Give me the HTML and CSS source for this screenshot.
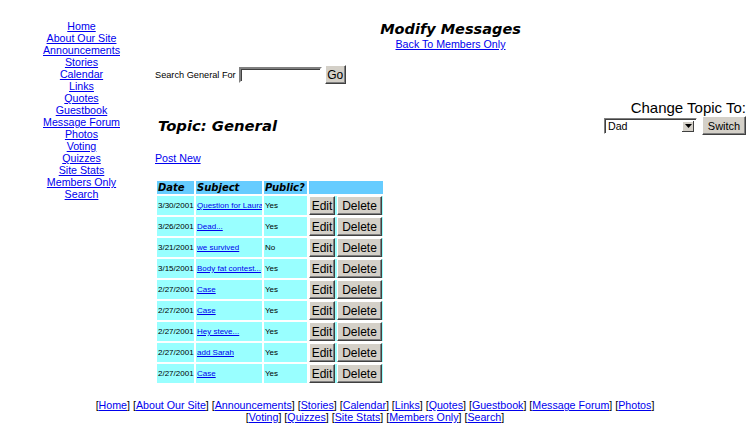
FILE: index.html
```html
<!DOCTYPE html>
<html>
<head>
<meta charset="utf-8">
<title>Modify Messages</title>
<link rel="stylesheet" href="styles.css">
</head>
<body>
<div class="page">
  <nav class="side-nav">
    <a href="#">Home</a>
    <a href="#">About Our Site</a>
    <a href="#">Announcements</a>
    <a href="#">Stories</a>
    <a href="#">Calendar</a>
    <a href="#">Links</a>
    <a href="#">Quotes</a>
    <a href="#">Guestbook</a>
    <a href="#">Message Forum</a>
    <a href="#">Photos</a>
    <a href="#">Voting</a>
    <a href="#">Quizzes</a>
    <a href="#">Site Stats</a>
    <a href="#">Members Only</a>
    <a href="#">Search</a>
  </nav>
  <main class="main">
    <header class="head">
      <h1 class="title">Modify Messages</h1>
      <a href="#" class="back">Back To Members Only</a>
    </header>
    <form class="search">
      <span class="search-label">Search General For</span>
      <input type="text" class="text-in">
      <button type="button" class="btn btn-go">Go</button>
    </form>
    <div class="topic-row">
      <h2 class="topic">Topic: General</h2>
      <div class="change">
        <div class="change-label">Change Topic To:</div>
        <div class="change-ctrl">
          <span class="sel">
            <span class="sel-val">Dad</span>
            <span class="sel-arrow"><svg width="7" height="4" viewBox="0 0 7 4"><path d="M0 0h7L3.5 4z" fill="#000"/></svg></span>
          </span>
          <button type="button" class="btn btn-switch">Switch</button>
        </div>
      </div>
    </div>
    <a href="#" class="post-new">Post New</a>
    <table class="msgs">
      <colgroup><col class="c-date"><col class="c-subj"><col class="c-pub"><col class="c-act"></colgroup>
      <thead>
        <tr><th>Date</th><th>Subject</th><th>Public?</th><th></th></tr>
      </thead>
      <tbody>
        <tr><td>3/30/2001</td><td><a href="#">Question for Laura</a></td><td>Yes</td><td class="act"><button class="btn btn-edit">Edit</button><button class="btn btn-del">Delete</button></td></tr>
        <tr><td>3/26/2001</td><td><a href="#">Dead...</a></td><td>Yes</td><td class="act"><button class="btn btn-edit">Edit</button><button class="btn btn-del">Delete</button></td></tr>
        <tr><td>3/21/2001</td><td><a href="#">we survived</a></td><td>No</td><td class="act"><button class="btn btn-edit">Edit</button><button class="btn btn-del">Delete</button></td></tr>
        <tr><td>3/15/2001</td><td><a href="#">Body fat contest...</a></td><td>Yes</td><td class="act"><button class="btn btn-edit">Edit</button><button class="btn btn-del">Delete</button></td></tr>
        <tr><td>2/27/2001</td><td><a href="#">Case</a></td><td>Yes</td><td class="act"><button class="btn btn-edit">Edit</button><button class="btn btn-del">Delete</button></td></tr>
        <tr><td>2/27/2001</td><td><a href="#">Case</a></td><td>Yes</td><td class="act"><button class="btn btn-edit">Edit</button><button class="btn btn-del">Delete</button></td></tr>
        <tr><td>2/27/2001</td><td><a href="#">Hey steve...</a></td><td>Yes</td><td class="act"><button class="btn btn-edit">Edit</button><button class="btn btn-del">Delete</button></td></tr>
        <tr><td>2/27/2001</td><td><a href="#">add Sarah</a></td><td>Yes</td><td class="act"><button class="btn btn-edit">Edit</button><button class="btn btn-del">Delete</button></td></tr>
        <tr><td>2/27/2001</td><td><a href="#">Case</a></td><td>Yes</td><td class="act"><button class="btn btn-edit">Edit</button><button class="btn btn-del">Delete</button></td></tr>
      </tbody>
    </table>
  </main>
</div>
<footer class="foot">
  <div>[<a href="#">Home</a>] [<a href="#">About Our Site</a>] [<a href="#">Announcements</a>] [<a href="#">Stories</a>] [<a href="#">Calendar</a>] [<a href="#">Links</a>] [<a href="#">Quotes</a>] [<a href="#">Guestbook</a>] [<a href="#">Message Forum</a>] [<a href="#">Photos</a>]</div>
  <div>[<a href="#">Voting</a>] [<a href="#">Quizzes</a>] [<a href="#">Site Stats</a>] [<a href="#">Members Only</a>] [<a href="#">Search</a>]</div>
</footer>
</body>
</html>
```
FILE: styles.css
```css
html, body { margin: 0; padding: 0; background: #fff; }
body { font-family: "Liberation Sans", Arial, sans-serif; font-size: 10.67px; color: #000; }
a { color: #0000ee; text-decoration: underline; }

.page { display: flex; padding: 20px 4px 0 8px; }
.side-nav { width: 147px; flex: none; display: flex; flex-direction: column; align-items: center; line-height: 12px; }

.main { flex: 1; display: flex; flex-direction: column; align-items: flex-start; }
.head { align-self: stretch; display: flex; flex-direction: column; align-items: center; }
.title { margin: 0; font-family: "DejaVu Sans", Verdana, sans-serif; font-weight: bold; font-style: italic; font-size: 14.5px; line-height: 18px; }
.back { line-height: 12px; }

.search { display: flex; align-items: center; margin-top: 15px; gap: 3px; }
.search-label { font-size: 9.2px; }
.text-in { width: 79px; height: 12px; padding: 0; margin: 0; border: 2px solid; border-color: #808080 #fff #fff #808080; box-shadow: inset 1px 1px #404040; background: #fff; }
.btn { font-family: "Liberation Sans", Arial, sans-serif; font-size: 12px; color: #000; background: #d4d0c8; border: 1px solid; border-color: #fff #404040 #404040 #fff; box-shadow: inset -1px -1px #808080; padding: 0; margin: 0; height: 19px; line-height: 16px; }
.btn-go { width: 21px; }

.topic-row { align-self: stretch; display: flex; justify-content: space-between; align-items: flex-end; margin-top: 16px; }
.topic { margin: 0 0 0 3px; font-family: "DejaVu Sans", Verdana, sans-serif; font-weight: bold; font-style: italic; font-size: 14.8px; line-height: 18px; }
.change { display: flex; flex-direction: column; align-items: flex-end; }
.change-label { font-size: 15px; line-height: 16px; }
.change-ctrl { display: flex; align-items: center; gap: 5px; }
.sel { display: flex; width: 93px; height: 16px; box-sizing: border-box; border: 1px solid; border-color: #808080 #fff #fff #808080; box-shadow: inset 1px 1px #404040; background: #fff; }
.sel-val { flex: 1; font-size: 10.67px; line-height: 14px; padding-left: 3px; }
.sel-arrow { width: 12px; margin: 2px 2px 1px 0; background: #d4d0c8; box-shadow: inset -1px -1px #404040, inset 1px 1px #fff; display: flex; align-items: center; justify-content: center; }
.btn-switch { width: 44px; font-size: 11px; }

.post-new { margin-top: 17px; line-height: 12px; }

.msgs { margin-top: 15px; border-spacing: 2px; font-size: 8px; table-layout: fixed; width: 230px; }
.c-date { width: 37px; }
.c-subj { width: 66px; }
.c-pub { width: 43px; }
.c-act { width: 74px; }
.msgs th { background: #66ccff; text-align: left; font-family: "DejaVu Sans", Verdana, sans-serif; font-weight: bold; font-style: italic; font-size: 10px; height: 13px; padding: 0 0 0 1px; line-height: 13px; white-space: nowrap; overflow: hidden; }
.msgs td { background: #99ffff; height: 19px; padding: 0 0 0 1px; white-space: nowrap; overflow: hidden; }
.msgs td.act { padding: 0; }
.btn-edit { width: 26px; margin-right: 2px; }
.btn-del { width: 45px; }

.foot { text-align: center; margin-top: 14px; line-height: 12px; }
```
